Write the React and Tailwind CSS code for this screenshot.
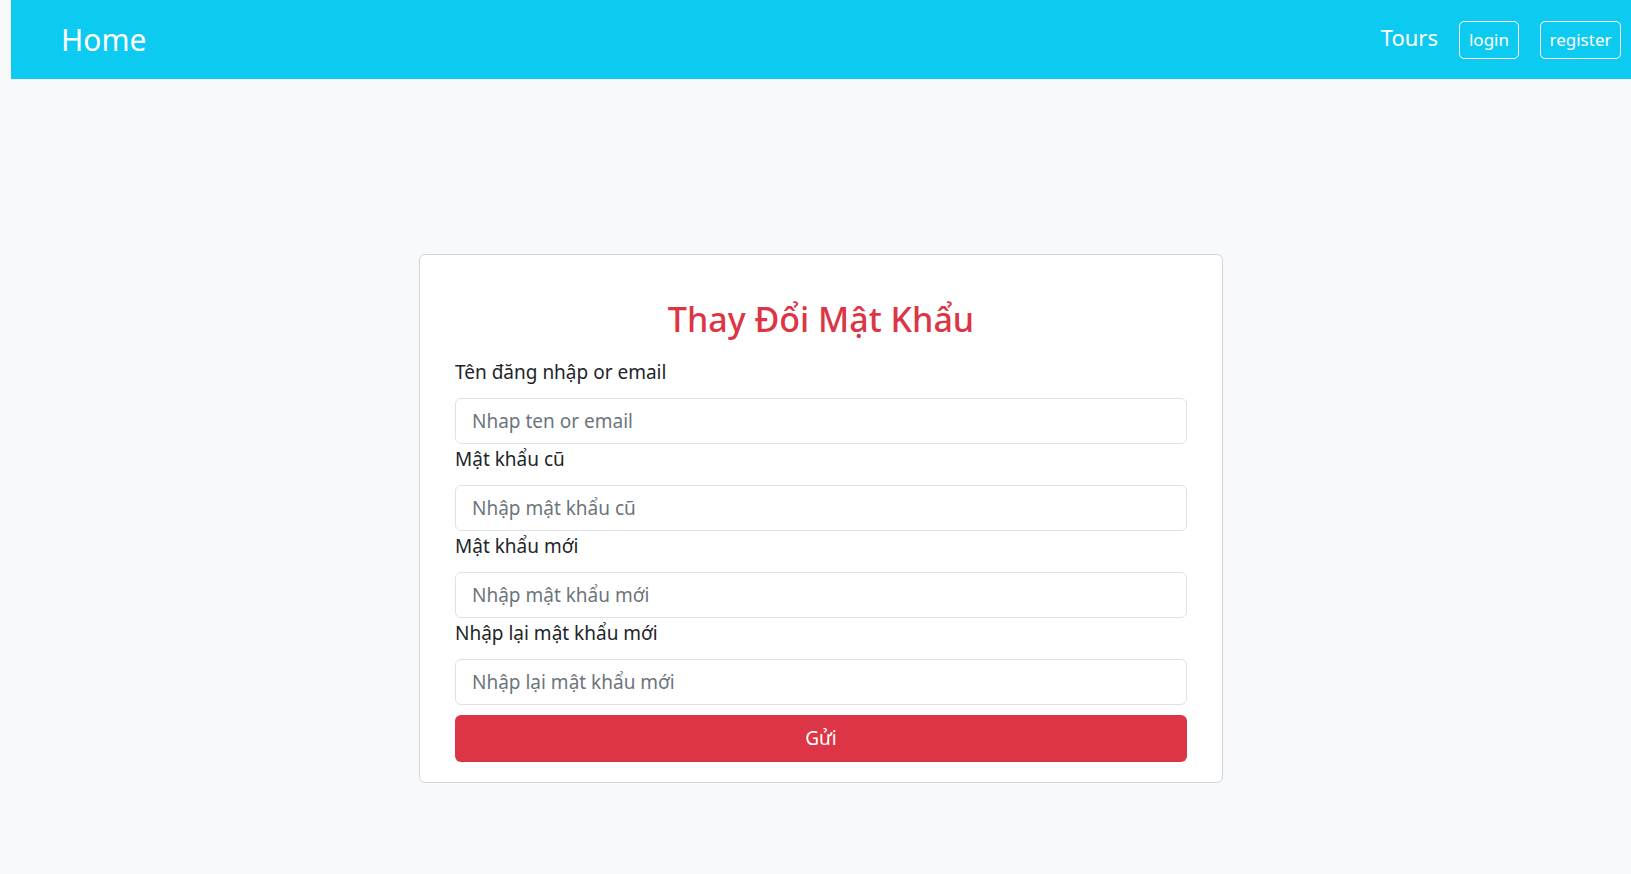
import React from 'react';

const fields = [
  { label: 'Tên đăng nhập or email', placeholder: 'Nhap ten or email', type: 'text' },
  { label: 'Mật khẩu cũ', placeholder: 'Nhập mật khẩu cũ', type: 'password' },
  { label: 'Mật khẩu mới', placeholder: 'Nhập mật khẩu mới', type: 'password' },
  { label: 'Nhập lại mật khẩu mới', placeholder: 'Nhập lại mật khẩu mới', type: 'password' },
];

function Navbar() {
  return (
    <nav className="h-[79px] bg-[#0dcaf0] flex items-center justify-between pl-[50px] pr-[10px]">
      <a href="#" className="text-white text-[30px] leading-none">Home</a>
      <div className="flex items-center gap-[21px]">
        <a href="#" className="text-white text-[22px] leading-none -mt-[6px]">Tours</a>
        <button className="h-[38px] w-[60px] border border-white rounded-[5px] text-white text-[17px] leading-none">login</button>
        <button className="h-[38px] w-[81px] border border-white rounded-[5px] text-white text-[17px] leading-none">register</button>
      </div>
    </nav>
  );
}

export default function App() {
  return (
    <div className="min-h-screen bg-[#f8f9fa] pl-[11px] font-['Noto_Sans',sans-serif]">
      <Navbar />

      {/* Change password card */}
      <div className="mx-auto mt-[175px] w-[804px] bg-white border border-[#d3d5d8] rounded-[6px] px-[35px] pb-[20px]">
        <h2 className="mt-[42px] text-center text-[#dc3545] text-[34px] leading-[44px] font-medium">
          Thay Đổi Mật Khẩu
        </h2>

        <form className="mt-[16px] flex flex-col" onSubmit={(e) => e.preventDefault()}>
          {fields.map((f) => (
            <div key={f.label} className="flex flex-col">
              <label className="text-[19px] leading-[30px] text-[#212529] mb-[11px]">{f.label}</label>
              <input
                type="text"
                placeholder={f.placeholder}
                className="h-[46px] w-full border border-[#dee2e6] rounded-[6px] px-[16px] text-[19px] text-[#212529] placeholder:text-[#6c757d] outline-none"
              />
            </div>
          ))}
          <button
            type="submit"
            className="mt-[10px] h-[47px] w-full bg-[#dc3545] rounded-[6px] text-white text-[19px]"
          >
            Gửi
          </button>
        </form>
      </div>
    </div>
  );
}
